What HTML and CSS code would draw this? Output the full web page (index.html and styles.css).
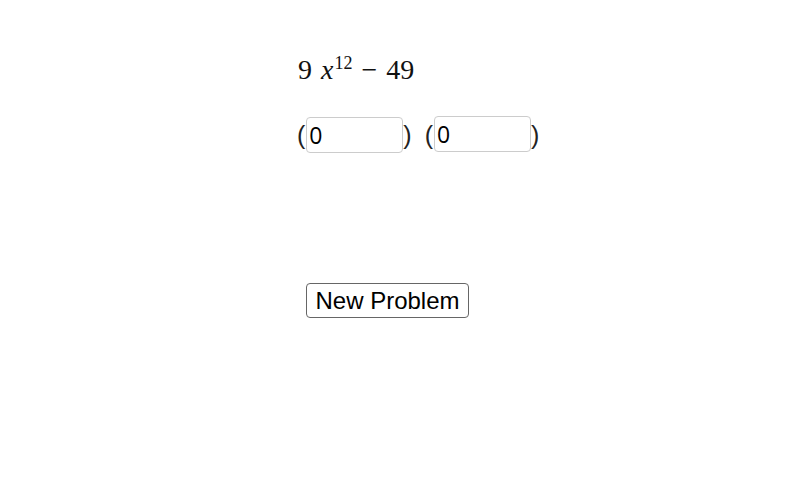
FILE: index.html
```html
<!DOCTYPE html>
<html>
<head>
<meta charset="utf-8">
<link rel="stylesheet" href="styles.css">
</head>
<body>
<div class="app">
  <div class="expr"><span>9</span> <i class="var">x</i><sup class="exp">12</sup><span class="minus">−</span><span>49</span></div>
  <div class="factors">
    <span class="paren">(</span><input class="box" value="0"><span class="paren">)</span>
    <span class="paren p2">(</span><input class="box b2" value="0"><span class="paren">)</span>
  </div>
  <button class="btn">New Problem</button>
</div>
</body>
</html>
```
FILE: styles.css
```css
html, body { margin: 0; padding: 0; background: #fff; }
.app { width: 800px; height: 503px; padding-left: 297px; box-sizing: border-box; padding-top: 52px; }
.expr { font-family: "Liberation Serif", "DejaVu Serif", serif; font-size: 28px; line-height: 36px; height: 36px; color: #111; padding-left: 1px; }
.var { font-style: italic; margin-left: 2px; }
.exp { font-size: 18px; vertical-align: 0; position: relative; top: -10px; margin-left: 1px; }
.minus { margin: 0 9px; }
.factors { display: flex; align-items: center; margin-top: 29px; font-family: "Liberation Sans", Arial, sans-serif; }
.paren { font-size: 25px; color: #222; }
.p2 { margin-left: 13px; }
.box { width: 97px; height: 36px; box-sizing: border-box; border: 1px solid #ccc; border-radius: 4px; font-family: "Open Sans", "DejaVu Sans", sans-serif; font-size: 23px; padding: 0 2px; color: #000; outline: none; margin: 0 0 0 1px; }
.b2 { position: relative; top: -1px; }
.btn { margin-left: 9px; margin-top: 130px; width: 163px; height: 35px; background: #fff; border: 1px solid #666; border-radius: 4px; font-family: "Liberation Sans", Arial, sans-serif; font-size: 24px; color: #000; padding: 0; display: block; }
```
